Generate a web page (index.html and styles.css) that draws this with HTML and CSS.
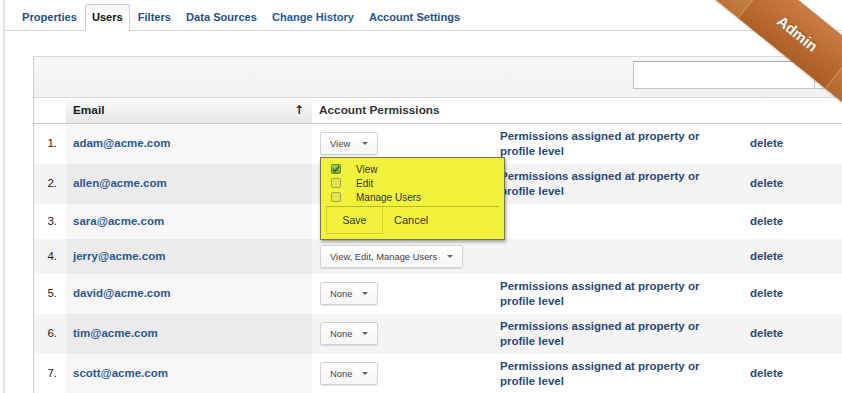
FILE: index.html
```html
<!DOCTYPE html>
<html lang="en">
<head>
    <meta charset="UTF-8">
    <title>Users - Account Admin</title>
    <link rel="stylesheet" href="styles.css">
</head>
<body>
    <div class="page">
        <ul class="tabs">
            <li><a href="#">Properties</a></li>
            <li class="active"><a href="#">Users</a></li>
            <li><a href="#">Filters</a></li>
            <li><a href="#">Data Sources</a></li>
            <li><a href="#" class="bright">Change History</a></li>
            <li><a href="#">Account Settings</a></li>
        </ul>

        <div class="users-panel">
            <div class="toolbar">
                <input type="text" class="search">
                <span class="search-btn"></span>
            </div>

            <table class="users">
                <colgroup>
                    <col class="col-num">
                    <col class="col-email">
                    <col class="col-perm">
                    <col class="col-desc">
                    <col class="col-del">
                </colgroup>
                <thead>
                    <tr>
                        <th></th>
                        <th class="sorted">Email <span class="sort-arrow">&#8593;</span></th>
                        <th>Account Permissions</th>
                        <th></th>
                        <th></th>
                    </tr>
                </thead>
                <tbody>
                    <tr>
                        <td class="num">1.</td>
                        <td class="sorted"><a href="#">adam@acme.com</a></td>
                        <td>
                            <div class="perm-wrap">
                                <button class="select">View <span class="caret"></span></button>
                                <!-- menu opened for adam -->
                                <div class="perm-menu">
                                    <label class="perm-option"><span class="check on"><svg width="9" height="8" viewBox="0 0 9 8"><path d="M1 4 L3.5 6.5 L8 1" fill="none" stroke="#2f6a1c" stroke-width="1.8"/></svg></span>View</label>
                                    <label class="perm-option"><span class="check"></span>Edit</label>
                                    <label class="perm-option"><span class="check"></span>Manage Users</label>
                                    <div class="menu-actions">
                                        <span class="btn-save">Save</span>
                                        <span class="btn-cancel">Cancel</span>
                                    </div>
                                </div>
                            </div>
                        </td>
                        <td class="desc">Permissions assigned at property or profile level</td>
                        <td class="del"><a href="#">delete</a></td>
                    </tr>
                    <tr>
                        <td class="num">2.</td>
                        <td class="sorted"><a href="#">allen@acme.com</a></td>
                        <td></td>
                        <td class="desc">Permissions assigned at property or profile level</td>
                        <td class="del"><a href="#">delete</a></td>
                    </tr>
                    <tr>
                        <td class="num">3.</td>
                        <td class="sorted"><a href="#">sara@acme.com</a></td>
                        <td></td>
                        <td class="desc"></td>
                        <td class="del"><a href="#">delete</a></td>
                    </tr>
                    <tr>
                        <td class="num">4.</td>
                        <td class="sorted"><a href="#">jerry@acme.com</a></td>
                        <td><button class="select">View, Edit, Manage Users <span class="caret"></span></button></td>
                        <td class="desc"></td>
                        <td class="del"><a href="#">delete</a></td>
                    </tr>
                    <tr>
                        <td class="num">5.</td>
                        <td class="sorted"><a href="#">david@acme.com</a></td>
                        <td><button class="select">None <span class="caret"></span></button></td>
                        <td class="desc">Permissions assigned at property or profile level</td>
                        <td class="del"><a href="#">delete</a></td>
                    </tr>
                    <tr>
                        <td class="num">6.</td>
                        <td class="sorted"><a href="#">tim@acme.com</a></td>
                        <td><button class="select">None <span class="caret"></span></button></td>
                        <td class="desc">Permissions assigned at property or profile level</td>
                        <td class="del"><a href="#">delete</a></td>
                    </tr>
                    <tr>
                        <td class="num">7.</td>
                        <td class="sorted"><a href="#">scott@acme.com</a></td>
                        <td><button class="select">None <span class="caret"></span></button></td>
                        <td class="desc">Permissions assigned at property or profile level</td>
                        <td class="del"><a href="#">delete</a></td>
                    </tr>
                </tbody>
            </table>
        </div>
    </div>

    <div class="ribbon">Admin</div>
</body>
</html>
```

FILE: styles.css
```css
:root {
    --link: #2b5795;
    --link-dark: #29487c;
    --line: #d2d2d2;
    --highlight: #f2f23c;
}

* {
    margin: 0;
    padding: 0;
    box-sizing: border-box;
    font-family: 'Liberation Sans', Arial, sans-serif;
}

html, body {
    overflow: hidden;
}

body {
    background: #fff;
    color: #222;
    width: 842px;
    height: 393px;
}

a {
    text-decoration: none;
}

.page {
    margin-left: 3px;
    border-left: 2px solid #e3e3e3;
    height: 393px;
}

/* tabs */
.tabs {
    list-style: none;
    display: flex;
    padding: 4px 0 0 10px;
    border-bottom: 1px solid #d5d5d5;
}

.tabs li {
    margin-right: 1px;
    margin-bottom: -1px;
    border: 1px solid transparent;
    border-radius: 3px 3px 0 0;
}

.tabs li.active {
    border-color: #cfcfcf;
    border-bottom-color: #fff;
    background: linear-gradient(#f4f4f4, #fff 40%);
}

.tabs a {
    display: block;
    padding: 5px 6px 6px;
    line-height: 14px;
    font-size: 11.1px;
    font-weight: 700;
    color: #24508c;
}

.tabs a.bright {
    color: #1d5aa3;
}

.tabs li.active a {
    color: #111;
}

/* users panel */
.users-panel {
    margin: 25px 0 0 28px;
    width: 820px;
    border-left: 1px solid #cfcfcf;
    border-top: 1px solid #d8d8d8;
    height: 400px;
}

.toolbar {
    display: flex;
    justify-content: flex-end;
    height: 41px;
    padding: 4px 8px 0 0;
    background: linear-gradient(#f7f7f7, #f1f1f1);
    border-bottom: 1px solid #d6d6d6;
}

.search {
    width: 182px;
    height: 28px;
    border: 1px solid #c4c4c4;
    border-top-color: #aaa;
    background: #fff;
}

.search-btn {
    width: 30px;
    height: 28px;
    border: 1px solid #c4c4c4;
    border-left: none;
    background: #fafafa;
}

.users {
    width: 819px;
    table-layout: fixed;
    border-collapse: collapse;
}

.col-num { width: 32px; }
.col-email { width: 246px; }
.col-perm { width: 180px; }
.col-desc { width: 250px; }

.users th {
    height: 25px;
    text-align: left;
    font-size: 11.8px;
    font-weight: 700;
    color: #333;
    padding: 0 7px;
    border-bottom: 1px solid #cacaca;
    background: #fff;
}

.users th.sorted {
    color: #1a1a1a;
    background: linear-gradient(#fbfbfb, #e6e6e6);
}

.sort-arrow {
    float: right;
    margin-right: 1px;
    font-family: 'DejaVu Sans', sans-serif;
    font-size: 12px;
    font-weight: 700;
    color: #2a2a2a;
}

.users td {
    height: 35px;
    padding: 5px 8px;
    vertical-align: middle;
    font-size: 11.5px;
    line-height: 15px;
}

.users tbody tr:nth-child(even) td {
    background: #f4f4f4;
}

.users td.sorted {
    background: #f7f7f7;
    padding-left: 7px;
}

.users tbody tr:nth-child(even) td.sorted {
    background: #ebebeb;
}

.users td.num {
    text-align: right;
    padding-right: 9px;
    color: #222;
}

.users td.sorted a {
    font-weight: 700;
    color: var(--link);
}

.users td.desc {
    padding-right: 30px;
    font-weight: 700;
    color: var(--link-dark);
}

.users td.del a {
    font-weight: 700;
    color: var(--link-dark);
}

/* permission select */
.select {
    display: inline-flex;
    align-items: center;
    justify-content: space-between;
    gap: 10px;
    min-width: 58px;
    height: 23px;
    padding: 0 9px 0 9px;
    border: 1px solid #d3d3d3;
    border-radius: 2px;
    background: linear-gradient(#fff, #f6f6f6);
    box-shadow: 0 1px 1px rgba(0, 0, 0, 0.12);
    font-size: 9.4px;
    color: #444;
    white-space: nowrap;
}

.caret {
    width: 0;
    height: 0;
    border-left: 3px solid transparent;
    border-right: 3px solid transparent;
    border-top: 3px solid #666;
}

.perm-wrap {
    position: relative;
}

.perm-menu {
    position: absolute;
    top: calc(100% + 2px);
    left: 0;
    z-index: 2;
    width: 185px;
    padding: 4px 0 5px;
    background: var(--highlight);
    border: 1px solid #77774a;
    box-shadow: 1px 2px 3px rgba(0, 0, 0, 0.35);
}

.perm-option {
    display: flex;
    align-items: center;
    height: 14px;
    padding-left: 10px;
    font-size: 10px;
    color: #333;
}

.check {
    display: flex;
    align-items: center;
    justify-content: center;
    width: 10px;
    height: 10px;
    margin-right: 15px;
    border: 1px solid #a3a35a;
    border-radius: 2px;
    background: #e6e64c;
}

.check.on {
    border-color: #5f8c34;
    background: linear-gradient(#a6d060, #74a83c);
}

.menu-actions {
    display: flex;
    align-items: center;
    height: 28px;
    margin: 2px 5px 0;
    border-top: 1px solid #b9b92a;
    font-size: 10.5px;
    color: #333;
}

.btn-save {
    display: flex;
    align-items: center;
    justify-content: center;
    width: 57px;
    height: 100%;
    border: 1px solid #d4d42e;
    border-top: none;
}

.btn-cancel {
    padding-left: 11px;
    font-size: 11px;
}

/* corner ribbon */
.ribbon {
    position: absolute;
    left: 668px;
    top: 7px;
    width: 260px;
    height: 52px;
    transform: rotate(39deg);
    display: flex;
    align-items: center;
    justify-content: center;
    font-size: 15px;
    font-weight: 700;
    color: #fff;
    text-shadow: 0 -1px 0 rgba(80, 30, 0, 0.5);
    background:
        linear-gradient(rgba(255, 255, 255, 0.12), rgba(0, 0, 0, 0.12)),
        linear-gradient(90deg, #d8893f 0, #d3823c 73px, #e9a565 74px, #c66d2c 75px, #c06828 185px, #e39c5a 186px, #cc7634 187px, #cf7a36 100%);
    box-shadow: 0 1px 2px rgba(0, 0, 0, 0.2);
}
```
